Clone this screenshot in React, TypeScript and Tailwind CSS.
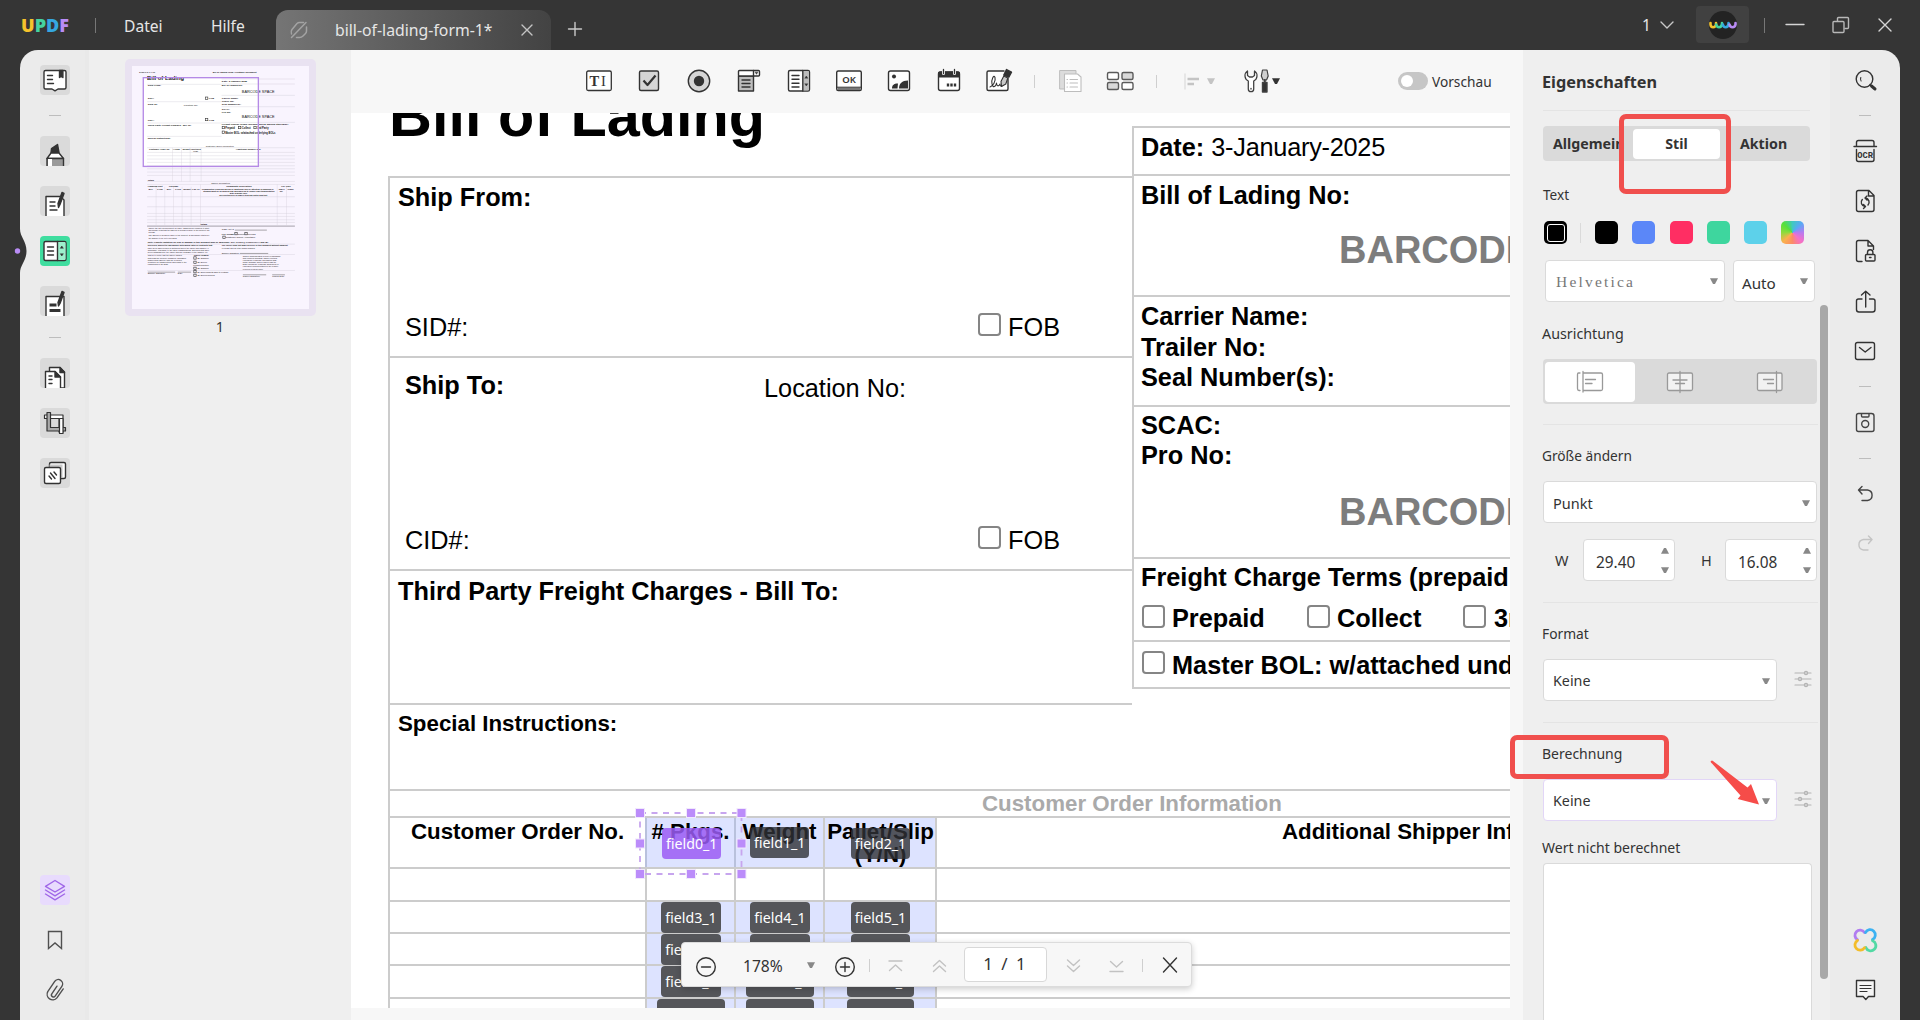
import type { ReactNode } from "react";

type Kids = { children?: ReactNode; className?: string };

const DARK = "#333333";

function Icon({ children, className = "", size = 30, stroke = DARK }: Kids & { size?: number; stroke?: string }) {
  return (
    <svg width={size} height={size} viewBox={`0 0 ${size} ${size}`} fill="none" stroke={stroke} strokeWidth="1.4" strokeLinecap="round" strokeLinejoin="round" className={`shrink-0 ${className}`}>
      {children}
    </svg>
  );
}

/* ---------- title bar ---------- */

function TitleBar() {
  return (
    <header className="flex h-[50px] shrink-0 text-[15.6px] text-[#e6e6e6]">
      <div className="flex h-[50px] w-[95px] items-center pl-[21px] font-['Open_Sans'] text-[18px] leading-none font-extrabold">
        <span className="text-[#f5c32c]">U</span>
        <span className="text-[#45d3a0]">P</span>
        <span className="text-[#35a7e0]">D</span>
        <span className="text-[#b98cf5]">F</span>
      </div>
      <div className="mt-[18px] h-[15px] w-px bg-[#777]" />
      <span className="ml-[28px] mt-[14px] w-[87px] leading-[24px]">Datei</span>
      <span className="mt-[14px] w-[65px] leading-[24px]">Hilfe</span>
      <div className="mt-[10px] flex h-[40px] w-[275px] rounded-t-[12px] bg-gradient-to-r from-[#757575] to-[#434343]">
        <Icon size={20} stroke="#a3a3a3" className="ml-[13px] mt-[10px]">
          <path d="M17 2.500 2.500 17.500M14.500 2.500H10.500Q9 2.500 8 3.500L3 9.500Q1.500 11.500 2.500 14M17.500 7V11Q17.500 12.500 16.500 13.500L14 16Q12.500 17.500 10.500 17.500H7.500" strokeWidth="1.5" />
        </Icon>
        <span className="ml-[26px] mt-[8px] w-[181px] leading-[24px] text-[15.8px]">bill-of-lading-form-1*</span>
        <Icon size={14} stroke="#c4c4c4" className="mt-[13px] ml-[4px]"><path d="M2 2l10 10M12 2 2 12" /></Icon>
      </div>
      <Icon size={18} stroke="#c9c9c9" className="ml-[15px] mt-[20px]"><path d="M9 2.500v13M2.500 9h13" /></Icon>
      <div className="ml-auto flex">
        <span className="mt-[13px] w-[17px] leading-[24px]">1</span>
        <Icon size={16} stroke="#c9c9c9" className="mt-[17px]"><path d="m2 5 6 6 6-6" /></Icon>
        <div className="ml-[21px] mt-[6px] flex h-[37px] w-[53px] items-center justify-center rounded-[4px] bg-[#414141]">
          <svg width="28" height="28" viewBox="0 0 28 28" fill="none" strokeWidth="2.600" strokeLinecap="round" strokeLinejoin="round">
            <circle cx="14" cy="14" r="14" fill="#232323" />
            <path d="M1.500 12v1.500q.2 2.700 2.600 2.700T7 13.800V12" stroke="#f5c32c" />
            <path d="M7.200 13.500q.5 2.700 2.900 2.700T13 13V12" stroke="#45d3a0" />
            <path d="M13.800 13.500q.5 2.700 2.900 2.700T19.500 13V12" stroke="#35a7e0" />
            <path d="M20.500 13.500q.5 2.700 3 2.700t3-2.700V12" stroke="#b98cf5" />
          </svg>
        </div>
        <div className="ml-[15px] mt-[18px] h-[15px] w-px bg-[#777]" />
        <Icon size={20} stroke="#d5d5d5" className="ml-[20px] mt-[15px]"><path d="M1 9.500h18" /></Icon>
        <Icon size={20} stroke="#b8b8b8" className="ml-[27px] mt-[15px]">
          <rect x="1" y="6.500" width="11" height="11" rx="1" />
          <path d="M5.500 6V3.500a1 1 0 0 1 1-1H15.500a1 1 0 0 1 1 1V12.500a1 1 0 0 1-1 1H13" />
        </Icon>
        <Icon size={16} stroke="#d5d5d5" className="ml-[25px] mt-[17px] mr-[27px]"><path d="M2 2l12 12M14 2 2 14" /></Icon>
      </div>
    </header>
  );
}

/* ---------- left rail ---------- */

function Tile({ children, className = "bg-[#dadada]" }: Kids) {
  return <div className={`h-[30px] w-[30px] shrink-0 overflow-hidden rounded-[4px] ${className}`}>{children}</div>;
}

const RailRule = ({ className = "" }: { className?: string }) => <div className={`h-px w-[12px] shrink-0 bg-[#bdbdbd] ${className}`} />;

function LeftRail() {
  return (
    <aside className="flex w-[69px] shrink-0 flex-col items-center border-r-4 border-[#e9e9e9] bg-[#ebebeb] pt-[15px] pl-[5px]">
      <Tile>
        <Icon>
          <path d="M4 7q0-1.500 1.500-1.500h19Q26 5.500 26 7v15.500q0 1.500-1.500 1.500H18l-3 1.800-3-1.800H5.500Q4 24 4 22.500Z" fill="#fff" />
          <path d="M7.500 10.500h5M7.500 14.500h5M7.500 18.500h6" />
          <path d="M19.500 5.500v7l1.700-1.300 1.700 1.300v-7Z" fill={DARK} />
        </Icon>
      </Tile>
      <RailRule className="mt-[20px] mb-[20px]" />
      <div className="flex flex-col gap-[20px]">
        <Tile>
          <Icon>
            <path d="M11 16.500 11.500 12.500 17.500 8.500 19 16.500Z" fill={DARK} />
            <path d="M7 22.500 11 17h8l4.500 5.500Z" fill="#fff" />
            <path d="M7 31v-8.500h16.500V31Z" fill="#9a9a9a" />
            <path d="M8 30v-7h4v7Z" fill="#fff" stroke="none" />
          </Icon>
        </Tile>
        <Tile>
          <Icon>
            <path d="M6 31V10.500h14.500L24 14v17Z" fill="#fff" />
            <path d="M10 16h5M10 20h5M10 24h7" />
            <path d="M22 6.500 24 7.500 20 18.500 18.500 21.500 18 17.500Z" fill={DARK} />
          </Icon>
        </Tile>
        <Tile className="bg-[#3fdd9f]">
          <Icon>
            <rect x="4" y="5.500" width="22" height="19" rx="1.500" fill="#fff" />
            <path d="M17.500 6h7q1 0 1 1v16q0 1-1 1h-7Z" fill="#9cf0cd" stroke="none" />
            <path d="M17.500 5.500v19M7.500 11h6M7.500 15h6M7.500 19h6" />
            <path d="m20.500 12 1.300-2 1.300 2ZM20.500 18l1.300 2 1.300-2Z" fill={DARK} strokeWidth=".6" />
          </Icon>
        </Tile>
        <Tile>
          <Icon>
            <path d="M6 31V10.500h18V31Z" fill="#fff" />
            <path d="M9.500 19h7M9.500 24.500h11" strokeWidth="3" strokeLinecap="butt" />
            <path d="M22 5.500 24 6.500 20 17.500 18.500 20 18 16.500Z" fill={DARK} />
          </Icon>
        </Tile>
      </div>
      <RailRule className="mt-[21px] mb-[20px]" />
      <div className="flex flex-col gap-[20px]">
        <Tile>
          <Icon>
            <path d="M9.500 30V9.500H20l4.500 4.500V30Z" fill="#fff" />
            <path d="M20 9.500v5h4.500Z" fill={DARK} />
            <path d="M5.500 31V13.500H15l5.500 5.500v12Z" fill="#fff" />
            <path d="M15 13.500V19h5.500Z" fill={DARK} />
            <path d="M9 18h3M9 21.500h3M9 25.500h3" />
          </Icon>
        </Tile>
        <Tile>
          <Icon>
            <path d="M4.500 7h18.500v17h-4V10.500H4.500Z" fill="#fff" strokeWidth="1.200" />
            <path d="M7 4.500h3.500V19.500H25.500V23H7Z" fill="#ababab" strokeWidth="1.200" />
            <path d="M19.500 10.500h3.500V25.500h-3.500Z" fill="#fff" strokeWidth="1.200" />
          </Icon>
        </Tile>
        <Tile>
          <Icon>
            <rect x="9.500" y="4.500" width="16" height="16" rx="1.500" fill="#fff" />
            <path d="M9.500 9V6.500h13V20h-2V9.500Z" fill="#c9c9c9" stroke="none" />
            <rect x="4.500" y="9.500" width="16" height="16" rx="1.500" fill="#fff" />
            <path d="m9 18 2.500 3M10.500 15l4.500 5.500M14 14l2.500 3" />
          </Icon>
        </Tile>
      </div>
      <div className="mt-auto flex flex-col items-center pb-[15px]">
        <Tile className="bg-[#e8dbfd]">
          <Icon stroke="#a067e8">
            <path d="m15 5.500 9.500 5.800L15 17 5.500 11.300Z" />
            <path d="m5.500 15 9.500 5.800L24.500 15M5.500 19 15 24.800 24.500 19" />
          </Icon>
        </Tile>
        <Icon className="mt-[20px]" stroke="#505050"><path d="M8.500 6.500h13v17L15 18l-6.500 5.500Z" strokeLinejoin="miter" /></Icon>
        <Icon className="mt-[20px]" stroke="#505050">
          <path d="m17.500 11.500-6.200 6.800a2 2 0 0 0 3 2.700l8-8.700a4.300 4.300 0 0 0-6.400-5.800l-8.300 9.100a5.600 5.600 0 0 0 8.200 7.500l7.500-8" transform="rotate(-8 15 15)" />
        </Icon>
      </div>
    </aside>
  );
}

/* ---------- thumbnail ---------- */

const thumbRules: [number, number, number][] = [
  [82, 88, 305], [305, 72, 525], [305, 87, 525], [305, 121, 525], [305, 155, 525], [305, 202, 525], [82, 140, 305], [82, 204, 305], [82, 244, 305],
  [82, 278, 525], [82, 292, 525], [82, 302, 525], [82, 312, 525], [82, 322, 525], [82, 332, 525], [82, 341, 525], [82, 351, 525], [82, 361, 525], [82, 379, 525],
  [82, 388, 525], [82, 425, 525], [82, 455, 525], [82, 475, 525], [82, 484, 525], [82, 494, 525], [82, 502, 525], [82, 567, 525], [82, 598, 525], [82, 646, 525],
];
const thumbCols: [number, number, number][] = [
  [158, 278, 379], [185, 278, 379], [211, 278, 379], [244, 278, 379], [109, 395, 510], [135, 395, 510], [161, 395, 510], [187, 395, 510], [214, 395, 510],
  [242, 388, 510], [472, 388, 510], [500, 395, 510],
];
const thumbBoxes: [number, number][] = [
  [257, 126], [257, 190], [307, 214], [356, 214], [402, 214], [307, 228], [345, 532], [375, 532], [309, 543], [222, 605], [222, 618], [222, 636], [222, 646], [222, 657],
];
const thumbTexts: [number, number, string, number, string][] = [
  [58, 53, "2025/1/3 14:05", 7.2, "400"], [279, 53, "Bill of Lading Form | Printable Document", 6.8, "700"],
  [82, 75, "Bill of Lading", 17.5, "700"], [306, 80, "Date: 3-January-2025", 7.5, "700"], [84, 94, "Ship From:", 7.5, "700"], [306, 94, "Bill of Lading No:", 7.5, "700"],
  [366, 113, "BARCODE SPACE", 11.5, "400"], [84, 133, "SID#:", 7.5, "700"], [267, 133, "FOB", 7.5, "700"], [306, 131, "Carrier Name:", 7.5, "700"],
  [306, 140, "Trailer No:", 7.5, "700"], [306, 149, "Seal Number(s):", 7.5, "700"], [84, 151, "Ship To:", 7.5, "700"], [192, 153, "Location No:", 7.5, "400"],
  [306, 165, "SCAC:", 7.5, "700"], [306, 173, "Pro No:", 7.5, "700"], [366, 190, "BARCODE SPACE", 11.5, "400"], [84, 197, "CID#:", 7.5, "700"], [267, 197, "FOB", 7.5, "700"],
  [84, 213, "Third Party Freight Charges - Bill To:", 7.5, "700"], [306, 210, "Freight Charge Terms (prepaid unless marked otherwise)", 7.4, "700"],
  [316, 222, "Prepaid", 8, "700"], [366, 222, "Collect", 8, "700"], [412, 222, "3rd Party", 8, "700"], [316, 236, "Master BOL: w/attached underlying BOLs", 7.7, "700"],
  [84, 253, "Special Instructions:", 7, "700"], [258, 276, "Customer Order Information", 6.8, "400"], [88, 285, "Customer Order No.", 6.6, "700"],
  [159, 285, "# Pkgs.", 6.5, "700"], [188, 285, "Weight", 6.5, "700"], [212, 285, "Pallet/Slip", 6.5, "700"], [220, 292, "(Y/N)", 6, "700"], [348, 285, "Additional Shipper Info", 6.8, "700"],
  [84, 378, "Totals", 6.5, "700"], [274, 387, "Carrier Information", 6.8, "400"], [84, 395, "Handling Unit", 6.8, "700"], [148, 395, "Package", 6.8, "700"],
  [319, 395, "Commodity Description", 6.8, "700"], [484, 395, "LTL Only", 6.8, "700"], [86, 404, "QTY", 6.6, "700"], [112, 404, "TYPE", 6.6, "700"], [141, 404, "QTY", 6.6, "700"],
  [166, 404, "TYPE", 6.6, "700"], [190, 404, "Weight", 6.6, "700"], [216, 404, "H.M. (X)", 6.3, "700"],
  [246, 404, "Commodities requiring special or additional care or attention in handling or", 6, "700"],
  [250, 411, "stowing must be so marked and packaged as to ensure safe transportation", 6, "700"], [330, 417, "with ordinary care.", 6, "700"],
  [298, 423, "See Section 2(e) of NMFC Item 360 notes and text", 6.2, "700"], [477, 404, "NMFC", 6, "700"], [480, 410, "No.", 6, "700"], [503, 404, "Class", 6.6, "700"], [242, 510, "Totals", 7, "700"],
  [86, 522, "Where the rate is dependent on value, shippers are required to state", 6.1, "400"], [86, 528, "specifically in writing the agreed or declared value of the property as", 6.1, "400"],
  [86, 535, "follows:", 6.1, "400"], [86, 544, "The agreed or declared value of the property is specifically stated by", 6.1, "400"], [86, 551, "the shipper to be not exceeding", 6.1, "400"],
  [306, 526, "COD Amt: $", 6.8, "400"], [306, 540, "Fee Terms:", 7.2, "700"], [353, 540, "Collect", 7, "400"], [383, 540, "Prepaid", 7, "400"], [318, 550, "Customer Check Acceptable", 7, "400"],
  [84, 563, "Note: Liability limitation for loss or damage in this shipment may be applicable. See 49 USC § 14706(c)(1)(A) and (B).", 6.6, "700"],
  [84, 574, "Received, subject to individually determined rates or contracts that", 6.1, "700"], [84, 581, "have been agreed upon in writing between the carrier and shipper, if", 6.1, "400"],
  [84, 587, "applicable, otherwise to the rates, classifications, and rules that have", 6.1, "400"], [84, 593, "been established by the carrier and are available to the shipper, on", 6.1, "400"],
  [306, 574, "The carrier shall not make delivery of this shipment without payment", 6.1, "700"], [306, 581, "of freight and all other lawful charges.", 6.1, "400"], [306, 597, "Shipper Signature", 6.6, "400"],
  [84, 604, "This is to certify that the above named", 6.1, "400"], [84, 611, "materials are properly classified, packaged,", 6.1, "400"], [84, 617, "marked and labeled, and are in proper", 6.1, "400"],
  [84, 623, "condition for transportation according to the", 6.1, "400"], [84, 629, "regulations of the DOT.", 6.1, "400"], [84, 658, "Shipper Signature", 6.6, "400"], [174, 658, "Date", 6.6, "400"],
  [222, 603, "Trailer Loaded:", 6.4, "700"], [233, 613, "By Shipper", 7, "400"], [233, 625, "By Driver", 7, "400"], [220, 633, "Freight Counted:", 6.4, "400"],
  [233, 643, "By Shipper", 7, "400"], [233, 653, "By Driver/pallets said to contain", 6.6, "400"], [233, 664, "By Driver/Pieces", 7, "400"],
  [369, 606, "Carrier acknowledges receipt of packages", 6.1, "400"], [369, 612, "and required placards. Carrier certifies", 6.1, "400"], [369, 618, "emergency response information was", 6.1, "400"],
  [369, 625, "made available and/or carrier has the", 6.1, "400"], [369, 631, "DOT emergency response guidebook or", 6.1, "400"], [369, 637, "equivalent documentation in the vehicle.", 6.1, "400"],
  [369, 644, "received in good order.", 6.1, "400"], [369, 666, "Carrier Signature", 6.8, "400"], [457, 666, "Pickup Date", 6.8, "400"],
];

function ThumbPanel() {
  return (
    <section className="flex w-[262px] shrink-0 flex-col items-center bg-[#efefef] pt-[9px]">
      <div className="flex h-[257px] w-[191px] items-center justify-center rounded-[5px] bg-[#e9e2f1] pl-[1px]">
        <svg width="177" height="243.500" viewBox="37 33 530 730" className="bg-[#f9f4fe]">
          <rect x="70" y="68" width="345" height="266" fill="#fff" />
          {thumbRules.map(([x, y, x2], i) => <path key={i} d={`M${x} ${y}H${x2}`} stroke="#c9c4d0" strokeWidth="1" />)}
          {thumbCols.map(([x, y, y2], i) => <path key={i} d={`M${x} ${y}V${y2}`} stroke="#d2ccd9" strokeWidth="1" />)}
          <path d="M82 513H525" stroke="#b4b0ba" strokeWidth="4" />
          <path d="M84 651h82M174 651h40M369 659h70M457 659h38M345 525h96M360 595h85" stroke="#555" strokeWidth="1.500" />
          {thumbTexts.map(([x, y, t, s, w], i) => (
            <text key={i} x={x} y={y} fontSize={s} fontWeight={w} fontFamily="'Liberation Sans', sans-serif" fill="#111">{t}</text>
          ))}
          {thumbBoxes.map(([x, y], i) => <rect key={i} x={x} y={y} width="7" height="7" fill="none" stroke="#333" strokeWidth="1.800" />)}
          <rect x="70.500" y="68" width="345" height="266" fill="none" stroke="#b58ae6" strokeWidth="4" />
        </svg>
      </div>
      <span className="mt-[-2px] leading-[24px] text-[14.500px] text-[#333]">1</span>
    </section>
  );
}

/* ---------- form toolbar ---------- */

const Slot = ({ children, className = "" }: Kids) => <div className={`flex h-[62px] w-[50px] items-center justify-center ${className}`}>{children}</div>;
const Caret = ({ fill = "#888", className = "" }: { fill?: string; className?: string }) => (
  <svg width="8" height="6" viewBox="0 0 8 6" className={`shrink-0 ${className}`}><path d="M0 .200h8L5 5.900H3Z" fill={fill} /></svg>
);

function Toolbar() {
  return (
    <div className="flex h-[63px] shrink-0 bg-[#f7f7f7] pl-[223px]">
      <Slot>
        <Icon>
          <rect x="2.700" y="5" width="24.600" height="19.500" rx="1.500" fill="#fff" strokeWidth="1.300" />
          <text x="5.500" y="19.500" fontSize="14.500" fontWeight="700" fontFamily="'Liberation Serif', serif" fill={DARK} stroke="none">T</text>
          <text x="17" y="19.500" fontSize="14.500" fontFamily="'Liberation Serif', serif" fill={DARK} stroke="none">I</text>
        </Icon>
      </Slot>
      <Slot><Icon><rect x="5.500" y="5" width="19" height="19.500" rx="1.500" fill="#d5d5d5" /><path d="m9.500 14.500 4 4.500 8-9.500" strokeWidth="2.200" strokeLinecap="butt" /></Icon></Slot>
      <Slot><Icon><circle cx="15" cy="15" r="10.700" fill="#d5d5d5" /><circle cx="15" cy="15" r="5.200" fill={DARK} stroke="none" /></Icon></Slot>
      <Slot>
        <Icon>
          <path d="M4.500 10h15v15h-15Z" fill="#bdbdbd" /><rect x="4.500" y="4.500" width="21" height="5.500" rx="1" fill="#fff" /><path d="M19.500 4.500V10M8 14h8M8 17.500h8M8 21h8" />
          <path d="m21.200 6.300 1.300 2 1.300-2Z" fill={DARK} strokeWidth=".5" />
        </Icon>
      </Slot>
      <Slot>
        <Icon>
          <rect x="4.500" y="4.500" width="21" height="20.500" rx="1.500" fill="#fff" /><path d="M19 5h5q1 0 1 1v17.500q0 1-1 1h-5Z" fill="#bcbcbc" stroke="none" />
          <path d="M18.800 4.500V25M8 9.500h7M8 13.300h7M8 17.200h7M8 21h7" /><path d="m21 12 1.300-2 1.300 2ZM21 18l1.300 2 1.300-2Z" fill={DARK} strokeWidth=".5" />
        </Icon>
      </Slot>
      <Slot>
        <Icon>
          <rect x="2.700" y="5" width="24.600" height="19.500" rx="1.500" fill="#fff" /><path d="M3.500 21.500h23v2.500h-23Z" fill="#777" stroke="none" />
          <path d="M3 21.200h24" strokeWidth="1" /><text x="15" y="17" textAnchor="middle" fontSize="9.500" fontWeight="600" fontFamily="'Noto Sans'" fill={DARK} stroke="none">OK</text>
        </Icon>
      </Slot>
      <Slot>
        <Icon>
          <rect x="4.500" y="5" width="21" height="19.500" rx="2" fill="#fff" /><circle cx="10" cy="10.500" r="2" fill={DARK} stroke="none" />
          <path d="M8 22.500c0-3 1.500-5 6-5L13.500 22.500ZM15 22.500c0-5 3-8 9-8V22.500Z" fill={DARK} stroke="none" />
        </Icon>
      </Slot>
      <Slot>
        <Icon>
          <rect x="4.500" y="6" width="21" height="18.500" rx="2" fill="#fff" /><path d="M4 11.500V7q0-1.500 1.500-1.500h19Q26 5.500 26 7v4.500Z" fill={DARK} stroke="none" />
          <path d="M9.500 3.500v4M20.500 3.500v4" stroke="#f7f7f7" strokeWidth="3" /><path d="M9.500 3.500v4M20.500 3.500v4" strokeWidth="1.300" />
          <path d="M12.800 19h2.400M16.300 19h2.400M19.800 19h2.400" strokeWidth="2.800" strokeLinecap="butt" />
        </Icon>
      </Slot>
      <Slot>
        <Icon>
          <path d="M24 12.500V23q0 1.500-1.500 1.500h-18Q3 24.500 3 23V6.500Q3 5 4.500 5H20" fill="#fff" />
          <path d="M6 21c3-1 6-6 5-9.500s-4 2-3 6.500 4 2.500 4.500-1c0 3 2 4 3.500 1 0 3 2 2.500 3 1" strokeWidth="1.100" />
          <path d="m22.500 3.500 5 2.700-2.700 5L19.800 9Z" fill={DARK} /><path d="M19.800 10 23.800 12l-2 6-4.300 2.500-.5-5Z" fill="#c9c9c9" strokeWidth="1.100" />
        </Icon>
      </Slot>
      <div className="mt-[25px] ml-[10px] h-[13px] w-px bg-[#cfcfcf]" />
      <Slot className="ml-[11px]">
        <Icon stroke="#bdbdbd"><path d="M4 4.500h16V23H4Z" fill="#dcdcdc" strokeWidth="1" /><path d="M8.500 8h13l3.500 3v14.500H8.500Z" fill="#fff" strokeWidth="1.100" /><path d="M11 13.500h.5M14 13.500h7.500M11 17h.5M14 17h7.500M11 21h.5M14 21h7.500" strokeWidth="1.100" /></Icon>
      </Slot>
      <Slot>
        <Icon className="mr-[3px]" stroke="#5a5a5a">
          <rect x="2.500" y="6.500" width="11" height="7" rx="1.500" fill="#fff" /><rect x="17" y="6.500" width="11" height="7" rx="1.500" fill="#d9d9d9" />
          <rect x="2.500" y="16.500" width="11" height="7" rx="1.500" fill="#d9d9d9" /><rect x="17" y="16.500" width="11" height="7" rx="1.500" fill="#fff" />
        </Icon>
      </Slot>
      <div className="mt-[25px] ml-[10px] h-[13px] w-px bg-[#cfcfcf]" />
      <Icon size={20} stroke="#c4c4c4" className="mt-[21px] ml-[26px]"><path d="M2 3v15" stroke="#dedede" /><path d="M4.500 8H16M4.500 13h6.500" strokeWidth="2.600" strokeLinecap="butt" /></Icon>
      <Caret fill="#c4c4c4" className="ml-[4px] mt-[28px]" />
      <Icon size={28} className="ml-[28px] mt-[17px]" stroke="#404040">
        <path d="M4.500 4A5.800 5.800 0 0 0 5.300 14V22a2.700 2.700 0 0 0 5.400 0V14A5.800 5.800 0 0 0 11.500 4V8.500L9.500 10h-3L4.500 8.500Z" fill="#fff" strokeWidth="1.300" />
        <path d="M8 21.500v.5" />
        <path d="M19.500 3h4.500l1.200 6-1.700 4h-3.500l-1.700-4Z" fill="#cfcfcf" strokeWidth="1.200" /><path d="M21.800 13v3" strokeWidth="2" /><path d="M19.500 15.500h4.500v9.500h-4.500Z" fill="#333" />
      </Icon>
      <Caret fill="#333" className="ml-[1px] mt-[28px]" />
      <div className="mt-[22px] ml-[118px] h-[18px] w-[30px] rounded-full bg-[#c6c6c6] p-[3px]"><div className="h-[12px] w-[12px] rounded-full bg-white" /></div>
      <span className="ml-[4px] mt-[21px] leading-[22px] text-[13.700px] text-[#333]">Vorschau</span>
    </div>
  );
}

/* ---------- document page ---------- */

const Line = ({ children, className = "" }: Kids) => <p className={`shrink-0 leading-[30px] whitespace-nowrap ${className}`}>{children}</p>;
const Check = ({ className = "" }: { className?: string }) => <span className={`h-[23px] w-[23px] shrink-0 rounded-[4px] border-2 border-[#858585] bg-white ${className}`} />;
const FieldTag = ({ children, className = "bg-[#55565a]" }: Kids) => (
  <span className={`z-10 flex h-[31px] shrink-0 items-center justify-center rounded-[4px] px-[4px] pt-[2px] font-['Noto_Sans'] text-[14.200px] leading-none font-normal whitespace-nowrap text-white ${className}`}>{children}</span>
);

const cols = ["w-[257px] shrink-0", "w-[89px] shrink-0", "w-[89px] shrink-0", "w-[112px] shrink-0", "min-w-0 flex-1"];
const fieldRows = [
  { h: "h-[32px]", tags: ["field3_1", "field4_1", "field5_1"] },
  { h: "h-[32px]", tags: ["field6_1", "field7_1", "field8_1"] },
  { h: "h-[33px]", tags: ["field9_1", "field10_1", "field11_1"] },
  { h: "h-[33px]", tags: ["field12_1", "field13_1", "field14_1"] },
];
const line = "border-[#cccccc]";

function OrderTable() {
  return (
    <div className="text-[22.300px] font-bold">
      <div className={`flex h-[27px] border-t-2 border-l-2 ${line}`}>
        <p className="ml-[592px] leading-[26px] whitespace-nowrap text-[#aaaaaa]">Customer Order Information</p>
      </div>
      <div className={`flex h-[51px] border-t-2 ${line}`}>
        <div className={`${cols[0]} border-l-2 ${line} pl-[21px] leading-[27px] whitespace-nowrap`}>Customer Order No.</div>
        <div className={`${cols[1]} relative flex justify-center border-l-2 border-[#b9c1dc] bg-[#dde3ff] leading-[27px] whitespace-nowrap`}>
          # Pkgs.
          <FieldTag className="absolute top-[10px] left-[15px] bg-[#9b5cf5]/85">field0_1</FieldTag>
        </div>
        <div className={`${cols[2]} relative flex justify-center border-l-2 border-[#b9c1dc] bg-[#dde3ff] leading-[27px] whitespace-nowrap`}>
          Weight
          <FieldTag className="absolute top-[9px] left-[14px] bg-[#303136]/80">field1_1</FieldTag>
        </div>
        <div className={`${cols[3]} relative flex flex-col items-center border-l-2 ${line} bg-[#dde3ff] pl-[1px] leading-[23px] whitespace-nowrap`}>
          <span className="mt-[2px]">Pallet/Slip</span>
          <span>(Y/N)</span>
          <FieldTag className="absolute top-[10px] bg-[#303136]/80">field2_1</FieldTag>
        </div>
        <div className={`min-w-0 flex-1 overflow-hidden border-l-2 ${line} pl-[345px] leading-[27px] whitespace-nowrap`}>Additional Shipper Info</div>
      </div>
      <div className={`flex h-[33px] border-t-2 ${line}`}>
        {cols.map((c, i) => <div key={i} className={`${c} border-l-2 ${line}`} />)}
      </div>
      {fieldRows.map((r) => (
        <div key={r.tags[0]} className={`flex ${r.h} border-t-2 ${line}`}>
          <div className={`${cols[0]} border-l-2 ${line}`} />
          {r.tags.map((t, i) => (
            <div key={t} className={`${cols[i + 1]} flex justify-center border-l-2 ${line} bg-[#dde3ff] pl-[1px]`}><FieldTag>{t}</FieldTag></div>
          ))}
          <div className={`min-w-0 flex-1 border-l-2 ${line}`} />
        </div>
      ))}
    </div>
  );
}

function Selection() {
  const pts: [number, number][] = [[0, 0], [51, 0], [101.500, 0], [0, 30.500], [101.500, 30.500], [0, 61], [51, 61], [101.500, 61]];
  return (
    <svg width="116" height="75" viewBox="-7 -7 116 75" className="absolute top-[693px] left-[282px] z-20">
      <rect width="101.500" height="61" fill="none" stroke="#c7a5ee" strokeWidth="1.800" strokeDasharray="6 5.500" />
      {pts.map(([x, y], i) => <rect key={i} x={x - 4.500} y={y - 4.500} width="9" height="9" fill="#bb8cfa" stroke="#f1e8fd" strokeWidth="1" />)}
    </svg>
  );
}

function DocumentPage() {
  return (
    <div className="relative h-[895px] w-[1159px] overflow-hidden bg-white font-['Liberation_Sans'] text-[25.300px] text-black">
      <div className="ml-[37px]">
        <div className="flex">
          <div className="w-[744px] shrink-0">
            <h1 className="mt-[-27px] ml-[1px] h-[90px] leading-[60px] text-[59.400px] font-bold whitespace-nowrap">Bill of Lading</h1>
            <div className={`h-[180px] border-t-2 border-l-2 ${line} pt-[4px]`}>
              <Line className="ml-[8px] font-bold">Ship From:</Line>
              <div className="mt-[100px] flex">
                <Line className="ml-[15px] w-[573px]">SID#:</Line><Check className="mt-[1px]" /><Line className="ml-[7px]">FOB</Line>
              </div>
            </div>
            <div className={`h-[213px] border-t-2 border-l-2 ${line} pt-[12px]`}>
              <div className="flex"><Line className="ml-[15px] w-[359px] font-bold">Ship To:</Line><Line className="mt-[3px]">Location No:</Line></div>
              <div className="mt-[122px] flex">
                <Line className="ml-[15px] w-[573px]">CID#:</Line><Check className="mt-[1px]" /><Line className="ml-[7px]">FOB</Line>
              </div>
            </div>
            <div className={`h-[136px] border-t-2 border-b-2 border-l-2 ${line} pt-[5px] font-bold`}><Line className="ml-[8px]">Third Party Freight Charges - Bill To:</Line></div>
          </div>
          <div className={`mt-[13px] h-[563px] min-w-0 flex-1 overflow-hidden border-b-2 ${line} font-bold`}>
            <div className={`h-[48px] border-t-2 border-l-2 ${line} pt-[4px] pl-[7px]`}><Line>Date: <span className="font-normal tracking-[-0.25px]">3-January-2025</span></Line></div>
            <div className={`h-[121px] border-t-2 border-l-2 ${line} pt-[4px] pl-[7px]`}>
              <Line>Bill of Lading No:</Line>
              <p className="mt-[20px] ml-[198px] leading-[40px] text-[38px] whitespace-nowrap text-[#7d7d7d]">BARCODE</p>
            </div>
            <div className={`h-[110px] border-t-2 border-l-2 ${line} pt-[4px] pl-[7px]`}>
              <Line>Carrier Name:</Line><Line className="mt-[1px]">Trailer No:</Line><Line>Seal Number(s):</Line>
            </div>
            <div className={`h-[152px] border-t-2 border-l-2 ${line} pt-[3px] pl-[7px]`}>
              <Line>SCAC:</Line><Line>Pro No:</Line>
              <p className="mt-[22px] ml-[198px] leading-[40px] text-[38px] whitespace-nowrap text-[#7d7d7d]">BARCODE</p>
            </div>
            <div className={`h-[83px] border-t-2 border-l-2 ${line} pt-[3px] pl-[7px]`}>
              <Line>Freight Charge Terms (prepaid</Line>
              <div className="mt-[11px] flex">
                <Check className="mt-[2px] ml-[1px]" /><Line className="ml-[7px] w-[135px]">Prepaid</Line>
                <Check className="mt-[2px]" /><Line className="ml-[7px] w-[126px]">Collect</Line>
                <Check className="mt-[2px]" /><Line className="ml-[8px]">3rd</Line>
              </div>
            </div>
            <div className={`flex h-[47px] border-t-2 border-l-2 ${line} pt-[8px] pl-[7px]`}>
              <Check className="mt-[1px] ml-[1px]" /><Line className="ml-[7px]">Master BOL: w/attached unde</Line>
            </div>
          </div>
        </div>
        <div className={`h-[84px] border-l-2 ${line} pt-[4px] pl-[8px] text-[22.300px] font-bold`}><Line>Special Instructions:</Line></div>
        <OrderTable />
      </div>
      <Selection />
    </div>
  );
}

function PagerBar() {
  const c = "#c2c2c2";
  return (
    <div className="absolute top-[892px] left-[330px] z-30 flex h-[45px] w-[511px] rounded-[4px] border border-[#dcdcdc] bg-[#f7f7f7] text-[15.600px] text-[#333] shadow-[0_2px_6px_rgba(0,0,0,0.2)]">
      <Icon size={22} className="ml-[13px] mt-[13px]"><circle cx="11" cy="11" r="9.300" /><path d="M6.500 11h9" /></Icon>
      <span className="ml-[26px] mt-[11px] w-[64px] leading-[24px]">178%</span>
      <Caret className="mt-[19px]" />
      <Icon size={22} className="ml-[19px] mt-[13px] mr-[13px]"><circle cx="11" cy="11" r="9.300" /><path d="M6.500 11h9M11 6.500v9" /></Icon>
      <div className="mt-[16px] h-[13px] w-px bg-[#cfcfcf]" />
      <Icon size={20} stroke={c} className="ml-[15px] mt-[12px]"><path d="M4 6h13M4.500 15.500l6-5.500 6 5.500" /></Icon>
      <Icon size={20} stroke={c} className="ml-[24px] mt-[12px]"><path d="m4.500 11 6-5.500 6 5.500M4.500 16.500l6-5.500 6 5.500" /></Icon>
      <div className="ml-[15px] mt-[4px] flex h-[35px] w-[83px] items-center justify-center rounded-[4px] border border-[#d8d8d8] bg-white pb-[2px] text-[17px] tracking-[2px]">1 / 1</div>
      <Icon size={20} stroke={c} className="ml-[16px] mt-[12px]"><path d="m4.500 5 6 5.500 6-5.500M4.500 11l6 5.500 6-5.500" /></Icon>
      <Icon size={20} stroke={c} className="ml-[23px] mt-[12px]"><path d="M4 16.500h13M4.500 6.500l6 5.500 6-5.500" /></Icon>
      <div className="ml-[16px] mt-[16px] h-[13px] w-px bg-[#cfcfcf]" />
      <Icon size={18} className="ml-[18px] mt-[13px]"><path d="m2.500 2 13 14M15.500 2l-13 14" /></Icon>
    </div>
  );
}

/* ---------- properties panel ---------- */

const Rule = ({ className = "" }: { className?: string }) => <div className={`h-px bg-[#e4e4e4] ${className}`} />;
const Label = ({ children, className = "" }: Kids) => <p className={`ml-[-1px] leading-[20px] whitespace-nowrap ${className}`}>{children}</p>;
const Select = ({ children, className = "", border = "border-[#dadada]" }: Kids & { border?: string }) => (
  <div className={`flex h-[42px] items-center justify-between rounded-[4px] border ${border} bg-white ${className}`}>{children}</div>
);
const Sliders = () => (
  <Icon size={20} stroke="#b4b4b4" className="mt-[-2px] ml-[16px]">
    <path d="M2 4h9.500M14.500 4H18M2 10h3.500M8.500 10H18M2 16h9.500M14.500 16H18" strokeWidth="1.200" />
    <circle cx="13" cy="4" r="1.500" /><circle cx="7" cy="10" r="1.500" /><circle cx="13" cy="16" r="1.500" />
  </Icon>
);
const swatches = ["bg-black", "bg-[#5b87f8]", "bg-[#ff2e63]", "bg-[#3ed69e]", "bg-[#5dd1ea]", "bg-[conic-gradient(#3fc9c0,#5aa8f5,#b77af0,#f570c8,#fb8a68,#fbb04e,#8edb3c,#54e03c,#3fc9c0)]"];

function Stepper({ value }: { value: string }) {
  return (
    <Select className="w-[92px] pr-[5px] pl-[12px] text-[15.400px]">
      <span className="mt-[5px]">{value}</span>
      <span className="flex flex-col gap-[13px]"><Caret className="rotate-180" /><Caret /></span>
    </Select>
  );
}

function Properties() {
  return (
    <section className="relative flex w-[307px] shrink-0 flex-col bg-[#efefef] pl-[20px] text-[#333]">
      <h2 className="mt-[20px] ml-[-1px] leading-[24px] text-[16.300px] font-bold">Eigenschaften</h2>
      <Rule className="mt-[16px] w-[267px]" />
      <div className="mt-[15px] flex h-[35px] w-[267px] items-center rounded-[4px] bg-[#dadada] text-[14.200px] font-bold">
        <span className="w-[90px] pl-[10px]">Allgemein</span>
        <span className="flex h-[30px] w-[87px] items-center justify-center rounded-[4px] bg-white">Stil</span>
        <span className="pl-[20px]">Aktion</span>
      </div>
      <Label className="mt-[24px] pl-[1px] text-[13.600px]">Text</Label>
      <div className="mt-[16px] ml-[1px] flex h-[23px] items-center">
        <div className="flex h-[23px] w-[23px] items-center justify-center rounded-[5px] bg-black"><div className="h-[18px] w-[18px] rounded-[3px] border border-white" /></div>
        <div className="mr-[14px] ml-[13px] h-[20px] w-px bg-[#dadada]" />
        <div className="flex gap-[14.300px]">
          {swatches.map((s) => <div key={s} className={`h-[23px] w-[23px] rounded-[5px] ${s}`} />)}
        </div>
      </div>
      <div className="mt-[16px] ml-[2px] flex gap-[8px]">
        <Select className="w-[180px] pr-[6px] pl-[10px] font-['Liberation_Serif'] text-[15.500px] tracking-[2.200px] text-[#777]"><span className="mt-[2px]">Helvetica</span><Caret /></Select>
        <Select className="w-[82px] pr-[6px] pl-[8px] text-[15.200px]"><span className="mt-[4px]">Auto</span><Caret /></Select>
      </div>
      <Label className="mt-[22px] text-[14.300px]">Ausrichtung</Label>
      <div className="mt-[15px] flex h-[45px] w-[274px] items-center rounded-[4px] bg-[#dadada] p-[2px]">
        <div className="flex h-[40px] w-[90px] items-center justify-center rounded-[4px] bg-white">
          <Icon stroke="#999"><path d="M5 6H3.500Q2.500 6 2.500 7.500v14Q2.500 23.500 4 23.500H5M8 6H26q1.500 0 1.500 1.500v14.500q0 1.500-1.500 1.500H8M8 4.500v20.500M10.500 12.500h10M10.500 16.500h6.500" strokeWidth="1.300" /></Icon>
        </div>
        <div className="flex h-[40px] w-[90px] items-center justify-center">
          <Icon stroke="#999"><rect x="2.500" y="6" width="25" height="17.500" rx="1.500" fill="#f2f2f2" strokeWidth="1.300" /><path d="M15 4.500v21M8 13h14M10.500 16.500h9" strokeWidth="1.300" /></Icon>
        </div>
        <div className="flex h-[40px] w-[90px] items-center justify-center">
          <Icon stroke="#999"><rect x="2.500" y="6" width="24.500" height="17.500" rx="1.500" fill="#f2f2f2" strokeWidth="1.300" /><path d="M21.500 4.500v21M8.500 12.500h10M12.500 16.500h6" strokeWidth="1.300" /></Icon>
        </div>
      </div>
      <Rule className="mt-[20px] w-[275px]" />
      <Label className="mt-[21px] text-[13.700px]">Größe ändern</Label>
      <Select className="mt-[15px] w-[274px] pr-[6px] pl-[9px] text-[14.500px]"><span className="mt-[3px]">Punkt</span><Caret className="mt-[2px]" /></Select>
      <div className="mt-[16px] flex items-center text-[14.500px]">
        <span className="mt-[1px] w-[40px] pl-[12px]">W</span><Stepper value="29.40" />
        <span className="mt-[1px] w-[50px] pl-[26px]">H</span><Stepper value="16.08" />
      </div>
      <Rule className="mt-[21px] w-[275px]" />
      <Label className="mt-[21px] text-[13.800px]">Format</Label>
      <div className="mt-[15px] flex items-center"><Select className="w-[234px] pr-[6px] pl-[9px] text-[14.300px]"><span className="mt-[2px]">Keine</span><Caret className="mt-[1px]" /></Select><Sliders /></div>
      <Rule className="mt-[21px] w-[275px]" />
      <Label className="mt-[21px] text-[14px]">Berechnung</Label>
      <div className="mt-[15px] flex items-center"><Select border="border-[#e2d6f7]" className="w-[234px] pr-[6px] pl-[9px] text-[14.300px]"><span className="mt-[2px]">Keine</span><Caret className="mt-[1px]" /></Select><Sliders /></div>
      <Label className="mt-[17px] text-[14px]">Wert nicht berechnet</Label>
      <div className="mt-[5px] w-[269px] flex-1 rounded-t-[4px] border border-b-0 border-[#dadada] bg-white" />

      <div className="absolute top-[255px] left-[297px] h-[674px] w-[8px] rounded-full bg-[#a8a8a8]" />
      <div className="absolute top-[64px] left-[96px] h-[80px] w-[112px] rounded-[7px] border-[5px] border-[#f04f4d]" />
      <div className="absolute top-[685px] left-[-13px] z-40 h-[44px] w-[159px] rounded-[7px] border-[5px] border-[#f04f4d]" />
      <svg width="52" height="47" viewBox="0 0 52 47" className="absolute top-[709px] left-[186px]">
        <path d="M2 2Q1 3 3 4.500L31.500 36.500 28.700 40 50 45.500 42 25 38.500 28.500 4 2Q3 1 2 2Z" fill="#f64c49" />
      </svg>
    </section>
  );
}

/* ---------- right rail ---------- */

function RightRail() {
  return (
    <aside className="flex w-[70px] shrink-0 flex-col items-center bg-[#ebebeb] pt-[15px]">
      <Icon><circle cx="14.500" cy="14" r="8.300" /><path d="M10.800 12.500q-.8 2 .3 3.500" strokeWidth="1.100" /><path d="m21.500 21 3.500 3" strokeWidth="3" /><path d="m20 19.500 1 1" /></Icon>
      <RailRule className="my-[20px]" />
      <div className="flex flex-col items-center gap-[20px]">
        <Icon>
          <path d="M6.500 10V6.500Q6.500 4.500 8.500 4.500h13.500Q24 4.500 24 6.500V10M4 10.500h22.500M6.500 13.500v10Q6.500 25.500 8.500 25.500H22q2 0 2-2V13.500" />
          <text x="15.200" y="21.700" textAnchor="middle" fontSize="8.800" fontWeight="700" fontFamily="'Liberation Mono', monospace" fill={DARK} stroke="none">OCR</text>
        </Icon>
        <Icon>
          <path d="M8.500 4.500H19l5 5V23.500Q24 25.500 22 25.500H8.500Q6.500 25.500 6.500 23.500V6.500Q6.500 4.500 8.500 4.500ZM18.500 4.500V10H24" />
          <path d="M15.500 12A4.200 4.200 0 0 1 18 19M15 20.500A4.200 4.200 0 0 1 12.300 13.500M17 10l-2 2 2 2M13.500 18.500l2 2-2 2" strokeWidth="1.400" />
        </Icon>
        <Icon><path d="M12 25.500H8.500Q6.500 25.500 6.500 23.500V6.500Q6.500 4.500 8.500 4.500H18l5.500 5.500v3.500M18 4.500V10h5.500" /><rect x="15.500" y="18.500" width="9.500" height="6.500" rx="1" /><path d="M17.500 18v-1.500a2.700 2.700 0 0 1 5.400 0V18M19.500 21.500h1.500" /></Icon>
        <Icon className="mt-[1px]"><path d="M12 12H8.500Q6.500 12 6.500 14v8.500Q6.500 25 9 25H22.500Q25 25 25 22.500V14Q25 12 23 12H19.500M15.700 20V4.500M11.500 8l4.200-3.800L20 8" /></Icon>
        <Icon className="mt-[-1px]"><rect x="5.500" y="6.500" width="19" height="17" rx="2" /><path d="m9.500 11.500 5.700 4.500 5.800-4.500" /></Icon>
      </div>
      <RailRule className="my-[20px]" />
      <Icon stroke="#444" className="mt-[1px]"><path d="M8.500 5.500H21.500Q24 5.500 24 8V21.500Q24 23.500 22 23.500H8.500Q6.500 23.500 6.500 21.500V7.500Q6.500 5.500 8.500 5.500ZM11.500 5.500v2.500q0 1 1 1h5.500q1 0 1-1V5.500" /><circle cx="15.200" cy="16" r="3.500" /></Icon>
      <RailRule className="my-[20px]" />
      <Icon stroke="#444"><path d="M12 7.500 8.500 11l3.500 4M9 11h8.500a5.300 5.300 0 0 1 0 10.500H12" /></Icon>
      <Icon stroke="#c4c4c4" className="mt-[21px]"><path d="m18.500 6 3.500 3.500-3.500 4M21.500 9.500H13.500a5.300 5.300 0 0 0 0 10.500H18" /></Icon>
      <Icon className="mt-auto">
        <g strokeWidth="2.800">
          <path d="M7.500 14.800A5.200 5.200 0 1 1 14.500 7.500" stroke="#b17cf0" /><path d="M15.500 7.500A5.200 5.200 0 1 1 22.500 14.500" stroke="#3cb2f2" />
          <path d="M22.500 15.800A5.200 5.200 0 1 1 15.800 22.500" stroke="#52d9a4" /><path d="M14.500 22.800A5.200 5.200 0 1 1 7.500 15.500" stroke="#f3bd2a" />
        </g>
      </Icon>
      <Icon className="mt-[20px] mb-[15px]"><path d="M6.500 5.500h18v16H18.500l-2.700 3-2.700-3H6.500Z" fill="#f5f5f5" /><path d="M10 10.500h11M10 13.500h11M10 16.500h7" strokeWidth="1.200" /></Icon>
    </aside>
  );
}

export default function App() {
  return (
    <div className="relative flex h-[1020px] w-[1920px] flex-col overflow-hidden bg-[#353535] font-['Noto_Sans',sans-serif]">
      <TitleBar />
      <div className="mx-[20px] flex min-h-0 flex-1 overflow-hidden rounded-t-[18px]">
        <LeftRail />
        <ThumbPanel />
        <main className="relative flex w-[1172px] shrink-0 flex-col bg-[#f7f7f7]">
          <Toolbar />
          <DocumentPage />
          <PagerBar />
        </main>
        <Properties />
        <RightRail />
      </div>
      <svg width="16" height="44" viewBox="0 0 16 44" className="absolute top-[229px] left-[12px]">
        <path d="M0 0H8C8 8 14.500 12 14.500 22S8 36 8 44H0Z" fill="#353535" />
        <circle cx="5.500" cy="22" r="2.700" fill="#b98cf5" />
      </svg>
    </div>
  );
}
